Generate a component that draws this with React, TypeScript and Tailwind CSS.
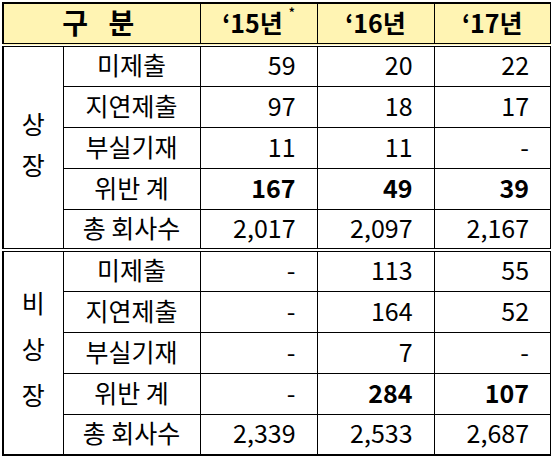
type Row = { label: string; vals: string[]; bold?: boolean };

const listed: Row[] = [
  { label: '미제출', vals: ['59', '20', '22'] },
  { label: '지연제출', vals: ['97', '18', '17'] },
  { label: '부실기재', vals: ['11', '11', '-'] },
  { label: '위반 계', vals: ['167', '49', '39'], bold: true },
  { label: '총 회사수', vals: ['2,017', '2,097', '2,167'] },
];

const unlisted: Row[] = [
  { label: '미제출', vals: ['-', '113', '55'] },
  { label: '지연제출', vals: ['-', '164', '52'] },
  { label: '부실기재', vals: ['-', '7', '-'] },
  { label: '위반 계', vals: ['-', '284', '107'], bold: true },
  { label: '총 회사수', vals: ['2,339', '2,533', '2,687'] },
];

function Group({ name, rows, last }: { name: string[]; rows: Row[]; last?: boolean }) {
  return (
    <>
      {rows.map((r, i) => {
        const bottom = i === rows.length - 1 && !last ? 'border-b-4 border-b-black border-double' : '';
        return (
          <tr key={r.label} className="h-[41px]">
            {i === 0 && (
              <td
                rowSpan={rows.length}
                className={`border border-black text-center align-middle ${
                  last ? 'leading-[46px] pb-[10px]' : 'leading-[41px] pb-[8px] border-b-4 border-double'
                }`}
              >
                {name.map((c) => (
                  <div key={c}>{c}</div>
                ))}
              </td>
            )}
            <td className={`border border-black text-center pb-[3px] ${bottom}`}>{r.label}</td>
            {r.vals.map((v, j) => (
              <td
                key={j}
                className={`border border-black text-right pr-[21px] pb-[3px] ${bottom} ${
                  r.bold && v !== '-' ? 'font-bold' : ''
                }`}
              >
                {v}
              </td>
            ))}
          </tr>
        );
      })}
    </>
  );
}

export default function App() {
  return (
    <div className="bg-white w-[551px] h-[460px] pt-[2px] pl-[2px]">
      <table
        className="border-collapse border-2 border-black text-black text-[25px] leading-none table-fixed w-[548px]"
        style={{ fontFamily: '"Noto Sans CJK KR", "Noto Sans", sans-serif' }}
      >
        <colgroup>
          <col className="w-[60px]" />
          <col className="w-[137px]" />
          <col className="w-[117px]" />
          <col className="w-[117px]" />
          <col className="w-[117px]" />
        </colgroup>
        <thead>
          <tr className="h-[42px] bg-[#fff4b3] font-bold">
            <th colSpan={2} className="border border-black border-b-4 border-double text-[28px] tracking-[7px] pb-[3px]">
              구 분
            </th>
            <th className="border border-black border-b-4 border-double pb-[3px]">
              ‘15년<sup className="text-[12px] align-top relative top-[2px] ml-[6px]">*</sup>
            </th>
            <th className="border border-black border-b-4 border-double pb-[3px]">‘16년</th>
            <th className="border border-black border-b-4 border-double pb-[3px]">‘17년</th>
          </tr>
        </thead>
        <tbody>
          <Group name={['상', '장']} rows={listed} />
          <Group name={['비', '상', '장']} rows={unlisted} last />
        </tbody>
      </table>
    </div>
  );
}
